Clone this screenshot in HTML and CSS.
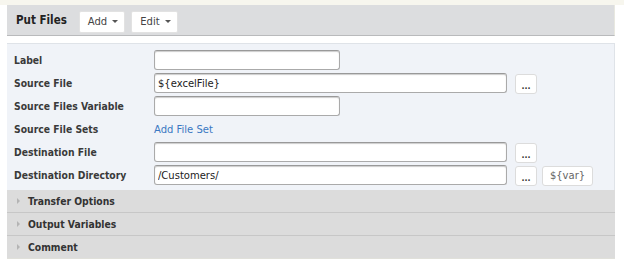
FILE: index.html
```html
<!DOCTYPE html>
<html>
<head>
<meta charset="utf-8">
<link rel="stylesheet" href="styles.css">
</head>
<body>
<div class="page">
  <div class="panel">
    <div class="header">
      <span class="title">Put Files</span>
      <button class="hbtn">Add <span class="caret"></span></button>
      <button class="hbtn">Edit <span class="caret"></span></button>
    </div>
    <div class="gap"></div>
    <div class="form">
      <div class="label">Label</div>
      <div class="field"><input class="inp short" type="text" value=""></div>

      <div class="label">Source File</div>
      <div class="field"><input class="inp long" type="text" value="${excelFile}"><button class="sbtn dots">...</button></div>

      <div class="label">Source Files Variable</div>
      <div class="field"><input class="inp short" type="text" value=""></div>

      <div class="label">Source File Sets</div>
      <div class="field"><a class="link">Add File Set</a></div>

      <div class="label">Destination File</div>
      <div class="field"><input class="inp long" type="text" value=""><button class="sbtn dots">...</button></div>

      <div class="label">Destination Directory</div>
      <div class="field"><input class="inp long" type="text" value="/Customers/"><button class="sbtn dots">...</button><button class="sbtn var">${var}</button></div>
    </div>
    <div class="section"><span class="arrow"></span>Transfer Options</div>
    <div class="section"><span class="arrow"></span>Output Variables</div>
    <div class="section"><span class="arrow"></span>Comment</div>
  </div>
</div>
</body>
</html>
```
FILE: styles.css
```css
html, body {
  margin: 0;
  padding: 0;
  background: #ffffff;
}
body {
  font-family: "DejaVu Sans", Verdana, sans-serif;
  color: #333;
}
.page {
  padding: 5px 0 0 7px;
  background: linear-gradient(#f7f6ee 0, #f7f6ee 5px, #fff 5px);
}
.panel {
  width: 608px;
  box-sizing: border-box;
}
.header {
  height: 30px;
  background: #dcdddf;
  border-bottom: 1px solid #b9babc;
  display: flex;
  align-items: center;
  padding-left: 9px;
  box-sizing: content-box;
  border-right: 1px solid #e8e8e0;
}
.title {
  font-family: "DejaVu Sans Condensed", "DejaVu Sans", sans-serif;
  font-weight: bold;
  font-size: 11.5px;
  color: #222;
  margin-right: 12px;
}
.hbtn {
  height: 22px;
  margin-top: 3px;
  font-family: "DejaVu Sans", Verdana, sans-serif;
  font-size: 10px;
  color: #444;
  background: #fff;
  border: 1px solid #e2e2e2;
  border-radius: 2px;
  padding: 0 6px 0 8px;
  margin-right: 6px;
  display: flex;
  align-items: center;
  gap: 5px;
}
.caret {
  width: 0;
  height: 0;
  border-left: 3px solid transparent;
  border-right: 3px solid transparent;
  border-top: 3px solid #555;
}
.gap {
  height: 7px;
  background: #fff;
  border-bottom: 1px solid #dfe3e8;
}
.form {
  background: #f0f3f8;
  border-right: 1px solid #dfe3e8;
  padding: 6px 0 5px 7px;
  display: grid;
  grid-template-columns: 140px 1fr;
  grid-auto-rows: 20px;
  row-gap: 3px;
}
.label {
  font-family: "DejaVu Sans Condensed", "DejaVu Sans", sans-serif;
  font-weight: bold;
  font-size: 10.3px;
  color: #3a3a3a;
  display: flex;
  align-items: center;
}
.field {
  display: flex;
  align-items: center;
}
.inp {
  box-sizing: border-box;
  height: 20px;
  border: 1px solid #aaa;
  border-top-color: #999;
  border-radius: 3px;
  background: #fff;
  font-family: "DejaVu Sans", Verdana, sans-serif;
  font-size: 10px;
  color: #222;
  padding: 0 3px;
  box-shadow: inset 0 1px 1px #ccc;
}
.short { width: 186px; }
.long { width: 353px; }
.sbtn {
  box-sizing: border-box;
  height: 20px;
  margin-top: 1px;
  background: #fff;
  border: 1px solid #dcdcdc;
  border-radius: 3px;
  font-family: "DejaVu Sans", Verdana, sans-serif;
  font-size: 10px;
  color: #555;
  padding: 0;
}
.dots {
  width: 22px;
  margin-left: 8px;
  font-weight: bold;
  line-height: 24px;
  font-size: 8px;
  color: #333;
}
.var {
  width: 51px;
  margin-left: 5px;
  color: #666;
}
.link {
  font-size: 10px;
  color: #3b78c2;
}
.section {
  height: 22px;
  background: #dcdcdc;
  border-bottom: 1px solid #c7c7c7;
  display: flex;
  align-items: center;
  font-family: "DejaVu Sans Condensed", "DejaVu Sans", sans-serif;
  font-weight: bold;
  font-size: 10.3px;
  color: #333;
  padding-left: 10px;
}
.section:last-child {
  border-bottom: 1px solid #e0e0da;
}
.arrow {
  width: 0;
  height: 0;
  border-top: 3px solid transparent;
  border-bottom: 3px solid transparent;
  border-left: 3px solid #b4b4b4;
  margin-right: 8px;
}
```
